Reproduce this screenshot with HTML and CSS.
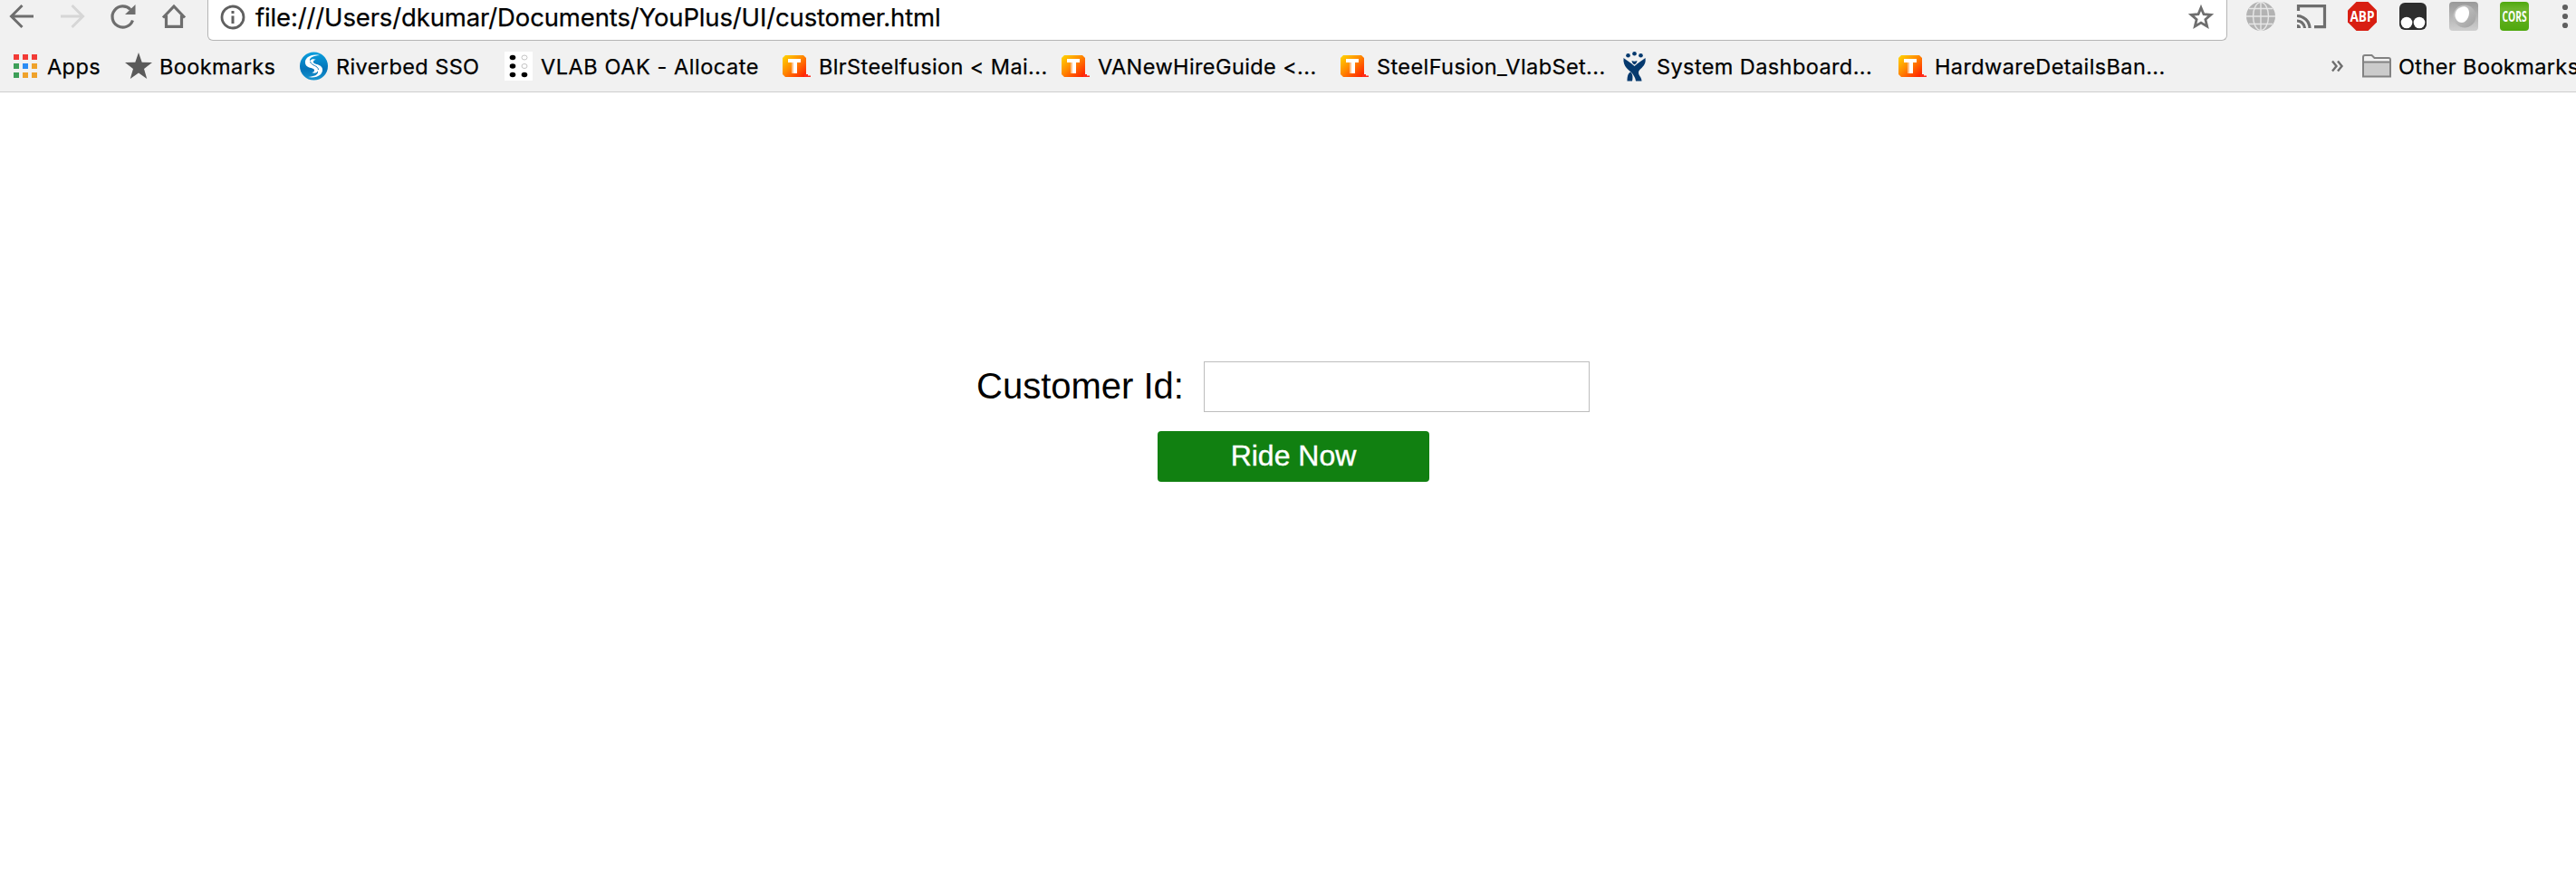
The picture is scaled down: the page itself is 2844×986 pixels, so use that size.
FILE: index.html
```html
<!DOCTYPE html>
<html lang="en">
<head>
<meta charset="utf-8">
<title>customer.html</title>
<link rel="stylesheet" href="styles.css">
</head>
<body>
<svg width="0" height="0" class="defs">
  <defs>
    <linearGradient id="orange" x1="0" y1="0" x2="1" y2="1"><stop offset="0" stop-color="#ffd800"/><stop offset=".45" stop-color="#ff8a00"/><stop offset="1" stop-color="#ff1500"/></linearGradient>
    <linearGradient id="blue" x1="0" y1="0" x2="0" y2="1"><stop offset="0" stop-color="#0aa0de"/><stop offset=".6" stop-color="#0473b8"/><stop offset="1" stop-color="#1795cf"/></linearGradient>
    <linearGradient id="green" x1="0" y1="0" x2="0" y2="1"><stop offset="0" stop-color="#4fa80e"/><stop offset=".25" stop-color="#6cb52c"/><stop offset=".6" stop-color="#5fae1c"/><stop offset="1" stop-color="#4fa80e"/></linearGradient>
    <linearGradient id="grey" x1="0" y1="0" x2="0" y2="1"><stop offset="0" stop-color="#999"/><stop offset="1" stop-color="#cfcfcf"/></linearGradient>
    <linearGradient id="disc" x1="0" y1="0" x2="1" y2="1"><stop offset="0" stop-color="#ccc"/><stop offset="1" stop-color="#a0a0a0"/></linearGradient>
    <symbol id="twiki" viewBox="0 0 32 32">
      <path d="M3 4H23L26 7V26L24 28H3L0 25V7Z" fill="url(#orange)"/>
      <path d="M24 25h4v1.500h3V28h-7z" fill="#ff2a1a"/>
      <path d="M10 11h4v13h-4z" fill="#ffc18a"/>
      <path d="M6 8h14v4H6zM12 9h4v15h-4z" fill="#fff"/>
    </symbol>
  </defs>
</svg>
<header class="chrome">
  <div class="toolbar">
    <nav class="nav">
      <svg width="28" height="28" viewBox="0 0 28 28" fill="none" stroke="#6e6e6e" stroke-width="3"><path d="M27 14H3M14.500 2 2.500 14l12 12"/></svg>
      <svg width="28" height="28" viewBox="0 0 28 28" fill="none" stroke="#d6d6d6" stroke-width="3"><path d="M1 14h24M13.500 2l12 12-12 12"/></svg>
      <svg width="28" height="28" viewBox="0 0 28 28"><path d="M22 6.500A11.600 11.600 0 1 0 24.500 18.500" fill="none" stroke="#6e6e6e" stroke-width="3.200"/><path d="M27.500 1v11H16z" fill="#6e6e6e"/></svg>
      <svg width="28" height="28" viewBox="0 0 28 28" fill="none" stroke="#6e6e6e" stroke-width="3.200"><path d="M2 15.500 14 3l12 12.500M5.500 13v12.400h17V13"/></svg>
    </nav>
    <div class="omnibox">
      <svg width="28" height="28" viewBox="0 0 28 28"><circle cx="14" cy="14" r="12" fill="none" stroke="#606060" stroke-width="2.800"/><path d="M12.500 7h3v3h-3zM12.500 12.500h3V21h-3z" fill="#606060"/></svg>
      <span class="url">file:///Users/dkumar/Documents/YouPlus/UI/customer.html</span>
      <svg class="fav" width="30" height="30" viewBox="0 0 30 30"><path d="M15 4.500l3 7.200 7.800.7-5.900 5.100 1.800 7.600-6.700-4-6.700 4 1.800-7.600-5.900-5.100 7.800-.7z" fill="none" stroke="#6e6e6e" stroke-width="2.800"/></svg>
    </div>
    <div class="extensions">
      <svg width="32" height="32" viewBox="0 0 32 32"><circle cx="16" cy="16" r="16" fill="#b3b3b3"/><g fill="none" stroke="#e6e6e6" stroke-width="1.400"><ellipse cx="16" cy="16" rx="8.500" ry="15.500"/><path d="M16 0v32M0 16h32M3 7.500h26M3 24.500h26"/></g></svg>
      <svg width="32" height="32" viewBox="0 0 32 32" fill="none" stroke="#6e6e6e" stroke-width="3.200"><path d="M1.500 10V4.600h29v23H19M0 15.500a14 14 0 0 1 14 13.500M0 21a8.500 8.500 0 0 1 8.500 8"/><path d="M0 25a4 4 0 0 1 4 4H0z" fill="#6e6e6e" stroke="none"/></svg>
      <svg width="32" height="32" viewBox="0 0 32 32"><path d="M9.500 0h13L32 9.500v13L22.500 32h-13L0 22.500v-13z" fill="#d81f12"/><text x="16" y="22" class="abp" textLength="27" lengthAdjust="spacingAndGlyphs">ABP</text></svg>
      <svg width="32" height="32" viewBox="0 0 32 32"><rect x="1" y="1" width="30" height="30" rx="6" fill="#2d2d2d"/><circle cx="9" cy="23" r="6.300" fill="#fff"/><circle cx="23" cy="23" r="6.300" fill="#fff"/></svg>
      <svg width="32" height="32" viewBox="0 0 32 32"><rect width="32" height="32" rx="4" fill="url(#grey)"/><circle cx="17" cy="16" r="12.500" fill="url(#disc)"/><path d="M13 6c5-2 9 1 9 6 0 6-4 11-8 11-5 0-8-5-7.500-9C7 10 9 7.500 13 6z" fill="#fff"/></svg>
      <svg width="32" height="32" viewBox="0 0 32 32"><rect width="32" height="32" rx="4" fill="url(#green)"/><g transform="translate(16 21.500) scale(.66 1)"><text class="cors">CORS</text></g></svg>
      <svg width="32" height="32" viewBox="0 0 32 32" fill="#606060"><circle cx="16" cy="6" r="3.100"/><circle cx="16" cy="16" r="3.100"/><circle cx="16" cy="26" r="3.100"/></svg>
    </div>
  </div>
  <div class="bookmarks">
    <div class="bookmark apps"><svg width="26" height="26" viewBox="0 0 26 26"><path d="M0 0h6v6H0zM10 0h6v6h-6zM20 0h6v6h-6z" fill="#f23b37"/><path d="M0 10h6v6H0zM0 20h6v6H0z" fill="#3d9f58"/><path d="M10 10h6v6h-6z" fill="#2b8cf4"/><path d="M20 10h6v6h-6zM10 20h6v6h-6zM20 20h6v6h-6z" fill="#efa22b"/></svg><span>Apps</span></div>
    <div class="bookmark"><svg width="30" height="30" viewBox="0 0 30 30"><path d="M15 0l3.700 10.800L30 11l-9 6.900L24.200 29 15 22.400 5.800 29 9 17.900 0 11l11.300-.2z" fill="#5a5a5a"/></svg><span>Bookmarks</span></div>
    <div class="bookmark"><svg width="32" height="32" viewBox="0 0 32 32"><circle cx="15.500" cy="16" r="15.500" fill="url(#blue)"/><path d="M22 4C12 2 5 7 6 13c1 4.500 6 4.500 9 6 2 1.500 1 4-2 4 5 2 8-1 7-5-1-4-8-4-9-8C10.500 6.500 15 4.500 22 4z" fill="#fff"/><path d="M9 28c10 2 17-3 16-9-1-4.500-6-4.500-9-6-2-1.500-1-4 2-4-5-2-8 1-7 5 1 4 8 4 9 8 .5 3.500-4 5.500-11 6z" fill="#fff"/><path d="M11.500 11c1.500 5 8.500 4 9 9" fill="none" stroke="#0a7cc0" stroke-width="1"/></svg><span>Riverbed SSO</span></div>
    <div class="bookmark"><svg width="32" height="32" viewBox="0 0 32 32"><path d="M0 0h31v32H0z" fill="#fff"/><ellipse cx="9" cy="6.500" rx="3.300" ry="2.700"/><ellipse cx="9" cy="16" rx="3.300" ry="2.700"/><ellipse cx="9" cy="25.500" rx="3.300" ry="2.700"/><ellipse cx="22" cy="25.500" rx="3.300" ry="2.700"/><g fill="none" stroke="#c4c4c4"><ellipse cx="22" cy="6.500" rx="3" ry="2.500"/><ellipse cx="22" cy="16" rx="3" ry="2.500"/></g></svg><span class="wide">VLAB OAK - Allocate</span></div>
    <div class="bookmark"><svg width="32" height="32"><use href="#twiki"/></svg><span>BlrSteelfusion &lt; Mai...</span></div>
    <div class="bookmark"><svg width="32" height="32"><use href="#twiki"/></svg><span>VANewHireGuide &lt;...</span></div>
    <div class="bookmark"><svg width="32" height="32"><use href="#twiki"/></svg><span>SteelFusion_VlabSet...</span></div>
    <div class="bookmark"><svg width="32" height="34" viewBox="0 0 32 34" fill="#05396e"><circle cx="8.500" cy="5.200" r="2.300"/><circle cx="15.500" cy="3.300" r="2.300"/><circle cx="22.500" cy="5.200" r="2.300"/><path d="M12.500 11c2 1 4 1 6 0-.3 2.200-1.500 3.700-3 4.200-1.500-.5-2.700-2-3-4.200z"/><path d="M3.500 8C7 10.500 11 13 15.500 17 20 13 24 10.500 27.500 8c.8 5-1 8-4 11-1.500 1.500-3.500 2.500-3.500 5 0 4 3.500 5 3.500 9.500H17c-.5-4-2-5.500-4-8.500C9.500 21 2.500 18 3.500 8z"/><path d="M11 23.500c2.500 2 3 5 2 10H7.500c0-4.500.5-8 3.500-10z"/></svg><span>System Dashboard...</span></div>
    <div class="bookmark"><svg width="32" height="32"><use href="#twiki"/></svg><span>HardwareDetailsBan...</span></div>
    <svg class="more" width="14" height="14" viewBox="0 0 14 14" fill="none" stroke="#6e6e6e" stroke-width="2.400"><path d="M1 1.500 5.500 7 1 12.500M7 1.500 11.500 7 7 12.500"/></svg>
    <div class="bookmark other"><svg width="32" height="26" viewBox="0 0 32 26" stroke="#828282" stroke-width="2"><path d="M1 24V3q0-2 2-2h7.500l3 3H29q2 0 2 2v18z" fill="#f1f1f1"/><path d="M1 8.500h30V24.500H1z" fill="#cbcbcb"/></svg><span>Other Bookmarks</span></div>
  </div>
</header>
<main class="page">
  <form class="ride-form">
    <div class="field"><label for="cid">Customer Id:</label><input id="cid" type="text"></div>
    <button type="button">Ride Now</button>
  </form>
</main>
</body>
</html>
```
FILE: styles.css
```css
* { box-sizing: border-box; }
body { margin: 0; background: #fff; color: #000; overflow: hidden; font-family: "Liberation Sans", Arial, sans-serif; }
svg { display: block; flex: none; overflow: visible; }
.defs { position: absolute; }
.chrome { height: 102px; overflow: hidden; background: #f1f1f1; border-bottom: 1px solid #cdcdcd; font-family: Inter, sans-serif; -webkit-text-stroke: 0.25px #000; }
.toolbar { display: flex; height: 45px; }
.nav { display: flex; flex: none; gap: 28px; width: 229px; padding: 4px 0 0 10px; }
.omnibox { display: flex; flex: none; align-items: center; width: 2230px; height: 45px; padding: 0 13px 7px; background: #fff; border: solid #b5b5b5; border-width: 0 1px 1px; border-radius: 0 0 6px 6px; }
.url { margin-left: 11px; font-size: 27.5px; letter-spacing: -0.14px; line-height: 32px; white-space: nowrap; }
.fav { margin-left: auto; }
.extensions { display: flex; flex: none; gap: 24px; padding: 2px 0 0 21px; -webkit-text-stroke: 0; }
.abp, .cors { fill: #fff; font-family: "Open Sans", sans-serif; font-weight: 700; text-anchor: middle; }
.abp { font-size: 16.5px; }
.cors { font-size: 15.5px; }
.bookmarks { display: grid; grid-template-columns: 123px 193px 226px 307px 308px 308px 309px 307px 478px 34px 300px; align-items: center; height: 56px; padding-left: 15px; }
.bookmark { display: flex; align-items: center; gap: 8px; font-size: 23.5px; letter-spacing: 0.4px; line-height: 30px; white-space: nowrap; }
.bookmark span { padding-top: 1px; }
.apps { gap: 11px; }
.bookmark .wide { letter-spacing: 0.55px; }
.page { padding: 297px 0 0 1078px; }
.field { display: flex; align-items: center; gap: 22px; height: 56px; font-size: 40px; }
.field label { width: 229px; padding-bottom: 2px; white-space: nowrap; }
.field input { width: 426px; height: 56px; margin: 0; padding: 0 8px; border: 1px solid #bdbdbd; border-radius: 0; background: #fff; font: inherit; }
.ride-form button { display: block; width: 300px; height: 56px; margin: 21px 0 0 200px; padding: 0 0 2px; border: 0; border-radius: 4px; background: #118011; color: #fff; font: 32px "Liberation Sans", Arial, sans-serif; -webkit-text-stroke: 0.4px #fff; }
```
